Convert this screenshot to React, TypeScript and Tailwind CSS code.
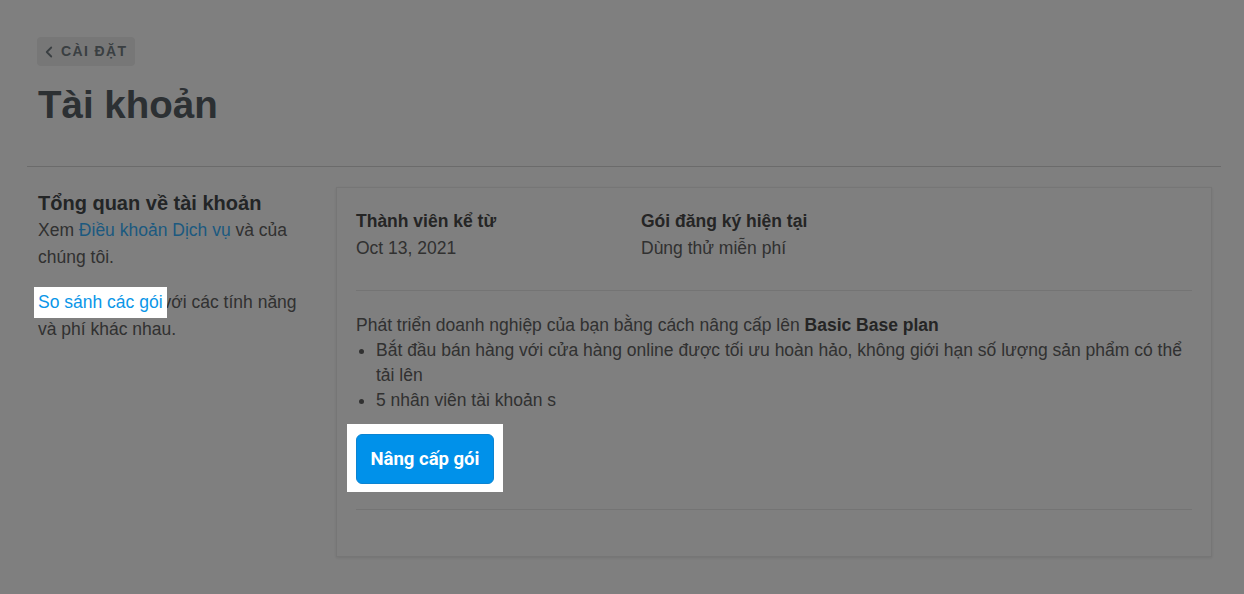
import { ChevronLeft } from "lucide-react";

export default function App() {
  return (
    <div className="relative min-h-screen bg-white pl-[27px] pr-[23px] pt-[37px] font-['Liberation_Sans',Arial,sans-serif] text-[17.5px] text-[#626262]">
      {/* Header */}
      <div className="px-[10px]">
        <button className="flex h-[29px] items-center gap-[3px] rounded-[4px] bg-[#eeeeee] pl-[3px] pr-[7px] text-[14px] font-bold uppercase tracking-[1.4px] text-[#747e84]">
          <ChevronLeft size={18} strokeWidth={2.4} />
          <span>Cài đặt</span>
        </button>
        <h1 className="mt-[16px] pl-px text-[38.5px] font-bold leading-[46px] text-[#586066]">Tài khoản</h1>
      </div>

      <div className="mt-[38px] border-t border-[#d6d6d6]" />

      {/* Account overview */}
      <div className="flex gap-[28px] pl-[11px] pr-[9px] pt-[20px]">
        <div className="w-[270px] shrink-0 pt-[2px]">
          <h2 className="text-[20px] font-bold leading-7 text-[#464a4d]">Tổng quan về tài khoản</h2>
          <p className="mb-[18px] leading-[27px]">
            Xem <a className="text-[#39b3ff]">Điều khoản Dịch vụ</a> và của chúng tôi.
          </p>
          <p className="leading-[27px]">
            <a className="relative z-20 -mx-1 -my-[2px] inline-block bg-white px-1 py-[2px] text-[#0a96e8]">So sánh các gói</a>
            với các tính năng và phí khác nhau.
          </p>
        </div>

        <div className="flex-1 border border-[#ececec] bg-white px-[19px] pt-[20px] pb-[46px] shadow-[0_1px_3px_rgba(0,0,0,0.1)]">
          <div className="flex border-b border-[#e8e8e8] pb-[28px] leading-[27px]">
            <div className="w-[285px]">
              <div className="font-bold text-[#4a4a4a]">Thành viên kể từ</div>
              <div>Oct 13, 2021</div>
            </div>
            <div>
              <div className="font-bold text-[#4a4a4a]">Gói đăng ký hiện tại</div>
              <div>Dùng thử miễn phí</div>
            </div>
          </div>

          <div className="border-b border-[#e8e8e8] pt-[22px] pb-[25px] leading-[25px]">
            <p>
              Phát triển doanh nghiệp của bạn bằng cách nâng cấp lên{" "}
              <b className="text-[#4a4a4a]">Basic Base plan</b>
            </p>
            <ul className="list-disc pl-5">
              <li>
                Bắt đầu bán hàng với cửa hàng online được tối ưu hoàn hảo, không giới hạn số lượng sản phẩm có thể tải lên
              </li>
              <li>5 nhân viên tài khoản s</li>
            </ul>
            <div className="relative z-20 -mx-[9px] mt-[11px] -mb-[8px] w-fit bg-white px-[9px] pt-[10px] pb-[8px]">
              <button className="flex h-[50px] w-[138px] items-center justify-center rounded-[6px] border border-[#0b84d2] bg-[#0091ea] font-['Roboto',sans-serif] text-[18.5px] font-bold text-white">
                Nâng cấp gói
              </button>
            </div>
          </div>
        </div>
      </div>

      {/* Tour overlay */}
      <div className="fixed inset-0 z-10 bg-black/50" />
    </div>
  );
}
